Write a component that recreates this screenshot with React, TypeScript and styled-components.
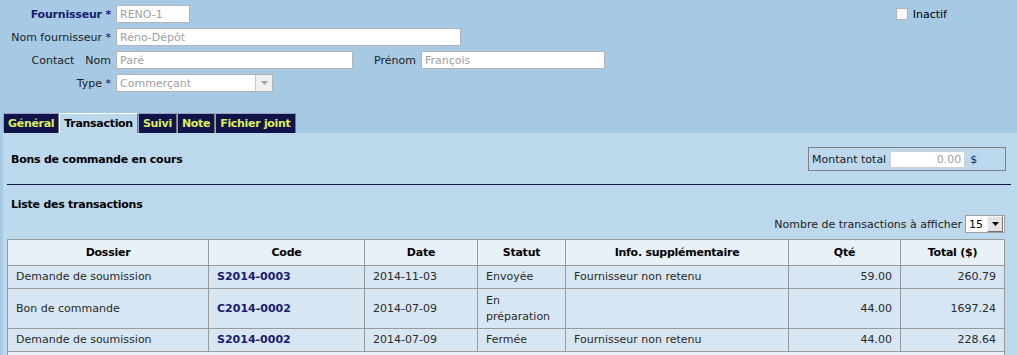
import styled, { createGlobalStyle } from 'styled-components';

const GlobalStyle = createGlobalStyle`
  body {
    margin: 0;
    background-color: #a6c9e4;
    font-family: 'DejaVu Sans', Verdana, sans-serif;
    font-size: 11px;
    color: #1c1c1c;
  }
`;

type Row = {
  dossier: string;
  code: string;
  date: string;
  statut: string;
  info: string;
  qte: string;
  total: string;
  tall?: boolean;
};

const rows: Row[] = [
  {
    dossier: 'Demande de soumission',
    code: 'S2014-0003',
    date: '2014-11-03',
    statut: 'Envoyée',
    info: 'Fournisseur non retenu',
    qte: '59.00',
    total: '260.79',
  },
  {
    dossier: 'Bon de commande',
    code: 'C2014-0002',
    date: '2014-07-09',
    statut: 'En préparation',
    info: '',
    qte: '44.00',
    total: '1697.24',
    tall: true,
  },
  {
    dossier: 'Demande de soumission',
    code: 'S2014-0002',
    date: '2014-07-09',
    statut: 'Fermée',
    info: 'Fournisseur non retenu',
    qte: '44.00',
    total: '228.64',
  },
];

const tabs = ['Général', 'Transaction', 'Suivi', 'Note', 'Fichier joint'];

const columns = [
  { label: 'Dossier', width: 201 },
  { label: 'Code', width: 156 },
  { label: 'Date', width: 113 },
  { label: 'Statut', width: 88 },
  { label: 'Info. supplémentaire', width: 223 },
  { label: 'Qté', width: 112 },
  { label: 'Total ($)', width: 104 },
];

const App = () => {
  return (
    <SLayout>
      <GlobalStyle />
      <SHeader>
        <SRow>
          <SLabel $strong>Fournisseur *</SLabel>
          <SInput $width={74} readOnly value="RENO-1" />
          <SCheckWrap>
            <SCheck />
            <span>Inactif</span>
          </SCheckWrap>
        </SRow>
        <SRow>
          <SLabel>Nom fournisseur *</SLabel>
          <SInput $width={345} readOnly value="Réno-Dépôt" />
        </SRow>
        <SRow>
          <SLabel>
            <SContact>Contact</SContact>Nom
          </SLabel>
          <SInput $width={237} readOnly value="Paré" />
          <SInlineLabel>Prénom</SInlineLabel>
          <SInput $width={184} readOnly value="François" />
        </SRow>
        <SRow>
          <SLabel>Type *</SLabel>
          <SSelect $width={157}>
            <span>Commerçant</span>
            <SSelectArrow>
              <svg width="7" height="4" viewBox="0 0 7 4">
                <path d="M0 0h7L3.5 4z" fill="#a0a0a0" />
              </svg>
            </SSelectArrow>
          </SSelect>
        </SRow>
      </SHeader>

      <STabBar>
        {tabs.map((tab) => (
          <STab key={tab} $active={tab === 'Transaction'}>
            {tab}
          </STab>
        ))}
      </STabBar>

      <SPanel>
        <SSectionHead>
          <STitle>Bons de commande en cours</STitle>
          <STotalBox>
            <span>Montant total</span>
            <SAmount>0.00</SAmount>
            <SDollar>$</SDollar>
          </STotalBox>
        </SSectionHead>
        <SRule />
        <SListTitle>Liste des transactions</SListTitle>
        <SCountRow>
          <span>Nombre de transactions à afficher</span>
          <SCountSelect>
            <span>15</span>
            <SCountArrow>
              <svg width="7" height="4" viewBox="0 0 7 4">
                <path d="M0 0h7L3.5 4z" fill="#000" />
              </svg>
            </SCountArrow>
          </SCountSelect>
        </SCountRow>

        <STable>
          <colgroup>
            {columns.map((c) => (
              <col key={c.label} style={{ width: c.width }} />
            ))}
          </colgroup>
          <thead>
            <tr>
              {columns.map((c) => (
                <STh key={c.label}>{c.label}</STh>
              ))}
            </tr>
          </thead>
          <tbody>
            {rows.map((r) => (
              <STr key={r.code} $tall={r.tall}>
                <STd>{r.dossier}</STd>
                <STd $code>{r.code}</STd>
                <STd>{r.date}</STd>
                <STd>{r.statut}</STd>
                <STd>{r.info}</STd>
                <STd $num>{r.qte}</STd>
                <STd $num>{r.total}</STd>
              </STr>
            ))}
            <SFootRow>
              <td colSpan={7} />
            </SFootRow>
          </tbody>
        </STable>
      </SPanel>
    </SLayout>
  );
};

export default App;

const SLayout = styled.div`
  display: flex;
  flex-direction: column;
  width: 1017px;
`;
const SHeader = styled.div`
  display: flex;
  flex-direction: column;
  gap: 5px;

  height: 113px;
  padding: 5px 70px 0 0;
  box-sizing: border-box;
`;
const SRow = styled.div`
  display: flex;
  align-items: center;
  gap: 5px;

  height: 18px;
`;
const SLabel = styled.label<{ $strong?: boolean }>`
  width: 111px;
  flex-shrink: 0;

  text-align: right;
  white-space: nowrap;
  font-weight: ${({ $strong }) => ($strong ? 'bold' : 'normal')};
  letter-spacing: ${({ $strong }) => ($strong ? '-0.2px' : 'normal')};
  color: ${({ $strong }) => ($strong ? '#1b1b6f' : '#1c1c1c')};
`;
const SContact = styled.span`
  margin-right: 11px;
`;
const SInlineLabel = styled.label`
  margin-left: 16px;
`;
const SInput = styled.input<{ $width: number }>`
  width: ${({ $width }) => $width}px;
  height: 18px;
  padding: 0 3px;
  box-sizing: border-box;

  border: 1px solid #b4b4b4;
  background-color: #fff;
  font-family: inherit;
  font-size: 11px;
  color: #a0a0a0;
  outline: none;
`;
const SSelect = styled.div<{ $width: number }>`
  display: flex;
  align-items: center;
  justify-content: space-between;

  width: ${({ $width }) => $width}px;
  height: 18px;
  padding-left: 3px;
  box-sizing: border-box;

  border: 1px solid #b4b4b4;
  background-color: #fff;
  color: #a0a0a0;
`;
const SSelectArrow = styled.span`
  display: flex;
  align-items: center;
  justify-content: center;

  width: 16px;
  height: 16px;

  border-left: 1px solid #c8c8c8;
  background-color: #f0f0f0;
`;
const SCheckWrap = styled.label`
  display: flex;
  align-items: center;
  gap: 5px;

  margin-left: auto;
  color: #000;
`;
const SCheck = styled.span`
  width: 10px;
  height: 10px;

  border: 1px solid #b4b4b4;
  background: linear-gradient(#f2f2f2, #fdfdfd);
`;
const STabBar = styled.div`
  display: flex;

  height: 20px;
  padding-left: 3px;
`;
const STab = styled.div<{ $active?: boolean }>`
  display: flex;
  align-items: center;

  padding: 0 4px;

  border-top: 1px solid ${({ $active }) => ($active ? '#ffffff' : '#9aa0c0')};
  border-left: 1px solid ${({ $active }) => ($active ? '#ffffff' : '#9aa0c0')};
  border-right: 1px solid #7a7a7a;
  background-color: ${({ $active }) => ($active ? '#bcd8ec' : '#13134b')};

  font-weight: bold;
  letter-spacing: -0.3px;
  color: ${({ $active }) => ($active ? '#000' : '#dbee5e')};
  white-space: nowrap;
`;
const SPanel = styled.div`
  display: flex;
  flex-direction: column;

  margin-left: 3px;

  background-color: #bcd8ec;
`;
const SSectionHead = styled.div`
  display: flex;
  align-items: center;
  justify-content: space-between;

  padding: 14px 11px 0 8px;
`;
const STitle = styled.div`
  font-weight: bold;
  letter-spacing: -0.25px;
  color: #000;
`;
const STotalBox = styled.div`
  display: flex;
  align-items: center;

  width: 198px;
  height: 24px;
  padding: 0 3px;
  box-sizing: border-box;

  border: 1px solid #808080;
  white-space: nowrap;
`;
const SAmount = styled.span`
  width: 75px;
  height: 17px;
  margin-left: 4px;
  padding-right: 3px;
  box-sizing: border-box;

  border: 1px solid #d0d0d0;
  background-color: #fff;
  text-align: right;
  line-height: 15px;
  color: #a0a0a0;
`;
const SDollar = styled.span`
  margin-left: 5px;
  color: #1b1b6f;
`;
const SRule = styled.div`
  height: 1px;
  margin: 13px 6px 0 4px;

  background-color: #14144a;
`;
const SListTitle = styled.div`
  padding: 13px 8px 0;

  font-weight: bold;
  letter-spacing: -0.25px;
  color: #000;
`;
const SCountRow = styled.div`
  display: flex;
  align-items: center;
  justify-content: flex-end;
  gap: 3px;

  height: 18px;
  margin-top: 4px;
  padding-right: 12px;
`;
const SCountSelect = styled.div`
  display: flex;
  align-items: center;
  justify-content: space-between;

  width: 40px;
  height: 18px;
  padding-left: 3px;
  box-sizing: border-box;

  border: 1px solid #a0a0a0;
  background-color: #fff;
  color: #000;
`;
const SCountArrow = styled.span`
  display: flex;
  align-items: center;
  justify-content: center;

  width: 14px;
  height: 14px;
  margin-right: 1px;

  border: 1px solid;
  border-color: #f8f8f8 #707070 #707070 #f8f8f8;
  background-color: #e4e4e4;
`;
const STable = styled.table`
  width: 997px;
  margin: 6px 0 0 4px;

  border-collapse: collapse;
  table-layout: fixed;
`;
const STh = styled.th`
  height: 25px;
  padding: 0 8px;

  border: 1px solid #9a9a9a;
  background-color: #e8f0f8;

  font-weight: bold;
  letter-spacing: -0.25px;
  text-align: center;
  color: #000;
`;
const STr = styled.tr<{ $tall?: boolean }>`
  height: ${({ $tall }) => ($tall ? '40px' : '23px')};
  background-color: #d6e6f3;
`;
const STd = styled.td<{ $code?: boolean; $num?: boolean }>`
  padding: 3px 8px;

  border: 1px solid #9a9a9a;

  line-height: 16px;
  font-weight: ${({ $code }) => ($code ? 'bold' : 'normal')};
  text-align: ${({ $num }) => ($num ? 'right' : 'left')};
  color: ${({ $code }) => ($code ? '#1b1b6f' : '#2a2a2a')};
`;
const SFootRow = styled.tr`
  height: 4px;

  & > td {
    padding: 0;
    border: 1px solid #9a9a9a;
    background-color: #e8f0f8;
  }
`;
